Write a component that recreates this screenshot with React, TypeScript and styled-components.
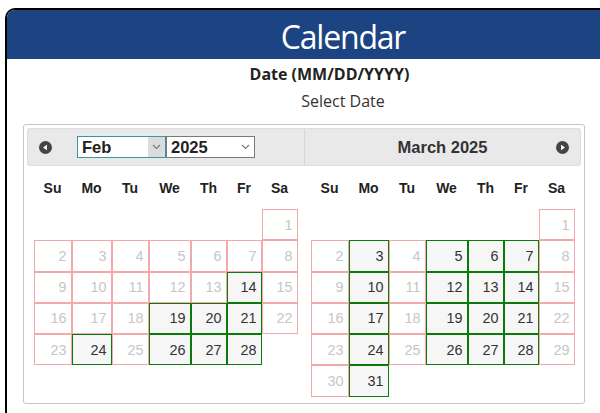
import React from "react";
import styled, { createGlobalStyle } from "styled-components";

const Global = createGlobalStyle`
  html, body { margin: 0; padding: 0; background: #fff; overflow: hidden; }
  body { width: 600px; height: 413px; }
`;

const Page = styled.div`
  width: 600px;
  height: 413px;
  overflow: hidden;
`;

const Card = styled.div`
  margin: 8px 0 0 5px;
  width: 676px;
  height: 420px;
  box-sizing: border-box;
  border: 2px solid #000;
  border-bottom: none;
  border-radius: 10px 10px 0 0;
  overflow: hidden;
  background: #fff;
`;

const Banner = styled.div`
  height: 49px;
  box-sizing: border-box;
  padding-top: 5px;
  background: #1c4482;
  color: #fff;
  font-family: "Open Sans", sans-serif;
  font-size: 32px;
  line-height: 44px;
  letter-spacing: -1.2px;
  text-align: center;
`;

const FieldLabel = styled.div`
  margin-top: 5px;
  padding-right: 27px;
  font-family: "Open Sans", sans-serif;
  font-weight: 700;
  font-size: 16px;
  line-height: 20px;
  color: #222;
  text-align: center;
`;

const Hint = styled.div`
  margin-top: 6px;
  font-family: "Open Sans", sans-serif;
  font-size: 16px;
  line-height: 22px;
  color: #333;
  text-align: center;
`;

const Widget = styled.div`
  margin: 12px 0 0 16px;
  width: 562px;
  box-sizing: border-box;
  border: 1px solid #c5c5c5;
  border-radius: 3px;
  padding: 3px;
  display: flex;
  font-family: "Liberation Sans", Arial, sans-serif;
`;

const Group = styled.div`
  flex: 1 1 0;
  display: flex;
  flex-direction: column;
  padding-bottom: 3px;
`;

const Header = styled.div<{ $first?: boolean }>`
  height: 38px;
  box-sizing: border-box;
  background: #e9e9e9;
  border: 1px solid #dddddd;
  ${(p) =>
    p.$first
      ? "border-right: none; border-radius: 3px 0 0 3px;"
      : "border-left: 1px solid #d6d6d6; border-radius: 0 3px 3px 0;"}
  display: grid;
  grid-template-columns: 1fr auto 1fr;
  align-items: center;
`;

const NavIcon = styled.svg<{ $side: "left" | "right" }>`
  width: 13px;
  height: 13px;
  display: block;
  ${(p) =>
    p.$side === "left"
      ? "justify-self: start; margin-left: 11px;"
      : "justify-self: end; margin-right: 11px; grid-column: 3;"}
`;

const Selects = styled.div`
  display: flex;
  grid-column: 2;
`;

const FakeSelect = styled.div<{ $focus?: boolean }>`
  width: 89px;
  height: 22px;
  box-sizing: border-box;
  border: 1px solid ${(p) => (p.$focus ? "#3d94a6" : "#7a7a7a")};
  background: #fff;
  display: flex;
  align-items: stretch;
  font-weight: 700;
  font-size: 16.5px;
  color: #222;
`;

const SelectText = styled.span`
  flex: 1;
  padding-left: 4px;
  line-height: 20px;
`;

const Arrow = styled.span<{ $hover?: boolean }>`
  width: 17px;
  display: flex;
  align-items: center;
  justify-content: center;
  background: ${(p) => (p.$hover ? "#dcdcdc" : "transparent")};
`;

const Title = styled.div`
  grid-column: 2;
  font-weight: 700;
  font-size: 16.5px;
  color: #333;
`;

const Grid = styled.div`
  width: 264px;
  margin: 0 auto;
  display: grid;
  grid-template-columns: 38px 40px 37px 42px 36px 35px 36px;
`;

const DayName = styled.div`
  height: 43px;
  display: flex;
  align-items: center;
  justify-content: center;
  font-weight: 700;
  font-size: 14px;
  color: #222;
`;

const Cell = styled.div<{ $kind: "empty" | "off" | "on" }>`
  height: 31.25px;
  box-sizing: border-box;
  display: flex;
  align-items: center;
  justify-content: flex-end;
  padding-right: 4px;
  font-size: 14.4px;
  border: 1px solid
    ${(p) => (p.$kind === "on" ? "#0b7a0b" : p.$kind === "off" ? "#f3a9a9" : "transparent")};
  background: ${(p) => (p.$kind === "on" ? "#f6f6f6" : "#fff")};
  color: ${(p) => (p.$kind === "on" ? "#333" : "#c6c6c6")};
`;

const Chevron = () => (
  <svg width="9" height="6" viewBox="0 0 9 6">
    <path d="M1 1 L4.5 4.5 L8 1" fill="none" stroke="#777" strokeWidth="1.1" />
  </svg>
);

const Prev = () => (
  <NavIcon $side="left" viewBox="0 0 13 13">
    <circle cx="6.5" cy="6.5" r="6.5" fill="#444" />
    <polygon points="4,6.5 8,3.8 8,9.2" fill="#fff" />
  </NavIcon>
);

const Next = () => (
  <NavIcon $side="right" viewBox="0 0 13 13">
    <circle cx="6.5" cy="6.5" r="6.5" fill="#444" />
    <polygon points="9,6.5 5,3.8 5,9.2" fill="#fff" />
  </NavIcon>
);

const DAYS = ["Su", "Mo", "Tu", "We", "Th", "Fr", "Sa"];

function Month({ lead, count, open }: { lead: number; count: number; open: number[] }) {
  const cells: React.ReactNode[] = [];
  for (let i = 0; i < lead; i++) cells.push(<Cell key={"e" + i} $kind="empty" />);
  for (let d = 1; d <= count; d++)
    cells.push(
      <Cell key={d} $kind={open.includes(d) ? "on" : "off"}>
        {d}
      </Cell>
    );
  return (
    <Grid>
      {DAYS.map((d) => (
        <DayName key={d}>{d}</DayName>
      ))}
      {cells}
    </Grid>
  );
}

export default function App() {
  return (
    <Page>
      <Global />
      <Card>
        <Banner>Calendar</Banner>
        <FieldLabel>Date (MM/DD/YYYY)</FieldLabel>
        <Hint>Select Date</Hint>
        <Widget>
          <Group>
            <Header $first>
              <Prev />
              <Selects>
                <FakeSelect $focus>
                  <SelectText>Feb</SelectText>
                  <Arrow $hover>
                    <Chevron />
                  </Arrow>
                </FakeSelect>
                <FakeSelect>
                  <SelectText>2025</SelectText>
                  <Arrow>
                    <Chevron />
                  </Arrow>
                </FakeSelect>
              </Selects>
            </Header>
            <Month lead={6} count={28} open={[14, 19, 20, 21, 24, 26, 27, 28]} />
          </Group>
          <Group>
            <Header>
              <Title>March 2025</Title>
              <Next />
            </Header>
            <Month
              lead={6}
              count={31}
              open={[3, 5, 6, 7, 10, 12, 13, 14, 17, 19, 20, 21, 24, 26, 27, 28, 31]}
            />
          </Group>
        </Widget>
      </Card>
    </Page>
  );
}
